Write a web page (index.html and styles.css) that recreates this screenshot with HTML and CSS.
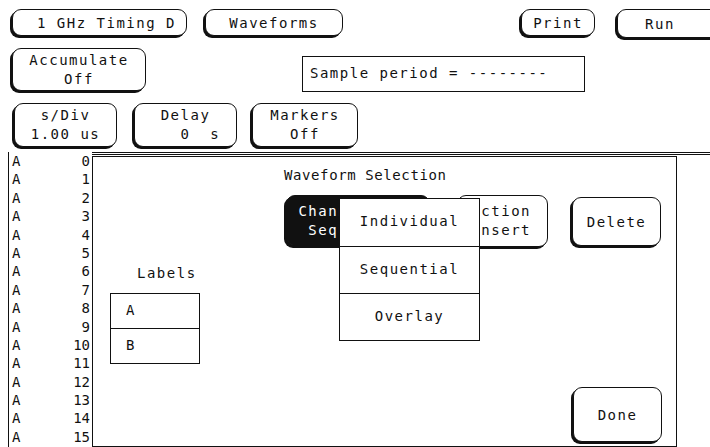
FILE: index.html
```html
<!DOCTYPE html>
<html lang="en">
<head>
    <meta charset="UTF-8">
    <meta name="viewport" content="width=device-width, initial-scale=1.0">
    <title>1 GHz Timing D - Waveforms</title>
    <link rel="stylesheet" href="styles.css">
</head>
<body>
    <div class="screen">
        <div class="row row1">
            <div class="btn b-module">1 GHz Timing D</div>
            <div class="btn b-menu">Waveforms</div>
            <div class="btn b-print">Print</div>
            <div class="btn b-run">Run</div>
        </div>

        <div class="row row2">
            <div class="btn two b-acc"><span>Accumulate</span><span>Off</span></div>
            <div class="field">Sample period = --------</div>
        </div>

        <div class="row row3">
            <div class="btn two b-sdiv"><span>s/Div</span><span>1.00 us</span></div>
            <div class="btn two b-delay"><span>Delay</span><span class="keep">   0  s</span></div>
            <div class="btn two b-markers"><span>Markers</span><span>Off</span></div>
        </div>

        <div class="main">
            <div class="chlist">
                <div class="ch"><span>A</span><span>0</span></div>
                <div class="ch"><span>A</span><span>1</span></div>
                <div class="ch"><span>A</span><span>2</span></div>
                <div class="ch"><span>A</span><span>3</span></div>
                <div class="ch"><span>A</span><span>4</span></div>
                <div class="ch"><span>A</span><span>5</span></div>
                <div class="ch"><span>A</span><span>6</span></div>
                <div class="ch"><span>A</span><span>7</span></div>
                <div class="ch"><span>A</span><span>8</span></div>
                <div class="ch"><span>A</span><span>9</span></div>
                <div class="ch"><span>A</span><span>10</span></div>
                <div class="ch"><span>A</span><span>11</span></div>
                <div class="ch"><span>A</span><span>12</span></div>
                <div class="ch"><span>A</span><span>13</span></div>
                <div class="ch"><span>A</span><span>14</span></div>
                <div class="ch"><span>A</span><span>15</span></div>
            </div>

            <div class="wave">
                <div class="dialog">
                    <div class="dlg-title">Waveform Selection</div>

                    <div class="dlg-buttons">
                        <div class="btn two inverted b-mode"><span>Channel Mode</span><span>Sequential</span></div>
                        <div class="btn two b-sel"><span>Selection</span><span>Insert</span></div>
                        <div class="btn b-delete">Delete</div>
                    </div>

                    <div class="dlg-lower">
                        <div class="labels">
                            <div class="labels-head">Labels</div>
                            <div class="label-box">A</div>
                            <div class="label-box">B</div>
                        </div>
                        <div class="btn b-done">Done</div>
                    </div>

                    <div class="popup">
                        <div class="popup-item">Individual</div>
                        <div class="popup-item">Sequential</div>
                        <div class="popup-item">Overlay</div>
                    </div>
                </div>
            </div>
        </div>
    </div>
</body>
</html>
```

FILE: styles.css
```css
* {
    box-sizing: border-box;
}

body {
    margin: 0;
    background: #fff;
    color: #111;
    font-family: "DejaVu Sans Mono", "Liberation Mono", monospace;
    font-size: 14px;
    letter-spacing: 1.5px;
}

.screen {
    width: 710px;
    height: 447px;
    overflow: hidden;
    padding-top: 9px;
}

.row {
    display: flex;
    align-items: flex-start;
}

/* softkey buttons: rounded, with a heavy left/bottom edge */
.btn {
    flex-shrink: 0;
    display: flex;
    align-items: center;
    justify-content: center;
    border: 1.5px solid #111;
    border-radius: 9px;
    box-shadow: -2px 2px 0 #111;
    background: #fff;
    white-space: nowrap;
}

.btn.two {
    flex-direction: column;
    line-height: 19px;
}

.keep {
    white-space: pre;
}

.inverted {
    background: #111;
    color: #fff;
}

.row1 {
    height: 27px;
}

.b-module {
    margin-left: 12px;
    width: 175px;
    height: 27px;
    padding-left: 14px;
}

.b-menu {
    margin-left: 18px;
    width: 138px;
    height: 27px;
}

.b-print {
    margin-left: 178px;
    width: 74px;
    height: 27px;
}

.b-run {
    margin-left: 22px;
    width: 110px;
    height: 29px;
    padding-right: 24px;
}

.row2 {
    margin-top: 12px;
}

.b-acc {
    margin-left: 12px;
    width: 134px;
    height: 43px;
}

.field {
    flex-shrink: 0;
    margin-left: 156px;
    margin-top: 8px;
    width: 283px;
    height: 36px;
    border: 1.5px solid #111;
    padding-left: 7px;
    line-height: 33px;
}

.row3 {
    margin-top: 11px;
}

.b-sdiv {
    margin-left: 14px;
    width: 103px;
    height: 44px;
}

.b-delay {
    margin-left: 17px;
    width: 103px;
    height: 44px;
}

.b-markers {
    margin-left: 15px;
    width: 106px;
    height: 44px;
}

.main {
    display: flex;
    margin-top: 5px;
    height: 296px;
}

.chlist {
    margin-left: 8px;
    width: 84px;
    border-left: 1.5px solid #111;
    padding: 0 2px 0 3px;
}

.ch {
    display: flex;
    justify-content: space-between;
    height: 18.4px;
    line-height: 18.4px;
    letter-spacing: 0;
}

.wave {
    flex: 1;
    border-top: 3px double #111;
}

.dialog {
    position: relative;
    display: flex;
    flex-direction: column;
    width: 585px;
    height: 291px;
    margin-top: 1px;
    border: 1.5px solid #111;
}

.dlg-title {
    margin-top: 9px;
    padding-left: 191px;
    line-height: 18px;
    letter-spacing: 0.6px;
}

.dlg-buttons {
    display: flex;
    align-items: flex-start;
    margin-top: 11px;
    padding-left: 193px;
}

.b-mode {
    width: 144px;
    height: 51px;
}

.b-sel {
    margin-left: 27px;
    width: 91px;
    height: 52px;
    align-items: flex-end;
    padding-right: 16px;
    line-height: 22px;
}

.b-delete {
    margin-left: 24px;
    margin-top: 2px;
    width: 89px;
    height: 49px;
}

.dlg-lower {
    flex: 1;
    display: flex;
}

.labels {
    margin-left: 17px;
    width: 90px;
}

.labels-head {
    margin-top: 17px;
    margin-bottom: 11px;
    padding-left: 27px;
    line-height: 18px;
}

.label-box {
    height: 35.5px;
    border: 1.5px solid #111;
    padding-left: 15px;
    line-height: 32px;
}

.label-box + .label-box {
    border-top: 0;
}

.b-done {
    align-self: flex-end;
    margin-left: auto;
    margin-right: 14px;
    margin-bottom: 4px;
    width: 89px;
    height: 55px;
}

/* pop-up choice list over the Channel Mode field */
.popup {
    position: absolute;
    left: 246px;
    top: 41px;
    width: 141px;
    background: #fff;
    border: 1.5px solid #111;
}

.popup-item {
    height: 47px;
    line-height: 45px;
    text-align: center;
}

.popup-item + .popup-item {
    border-top: 1.5px solid #111;
}
```
